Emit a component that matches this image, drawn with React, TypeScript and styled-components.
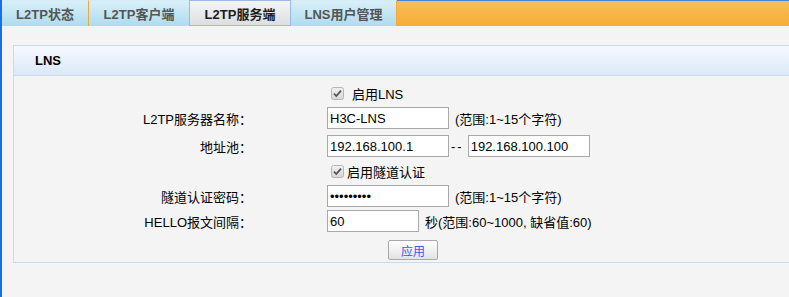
import styled, { createGlobalStyle } from "styled-components";

const GlobalStyle = createGlobalStyle`
  html, body {
    margin: 0;
    padding: 0;
    background: #f4f4f4;
    overflow: hidden;
  }
  body {
    font-family: "Liberation Sans", Arial, "Noto Sans CJK SC", sans-serif;
    font-size: 13px;
    color: #000;
  }
`;

const Page = styled.div`
  height: 297px;
  border-left: 2px solid #1b6fe6;
  background: #f4f4f4;
`;

const TabStrip = styled.div`
  display: flex;
  height: 26px;
`;

const Tab = styled.div<{ $active?: boolean; $w: number }>`
  box-sizing: border-box;
  width: ${(p) => p.$w}px;
  display: flex;
  align-items: center;
  justify-content: center;
  font-weight: bold;
  font-size: 13px;
  white-space: nowrap;
  color: ${(p) => (p.$active ? "#1c1c1c" : "#555")};
  background: ${(p) =>
    p.$active
      ? "linear-gradient(#f3f4f5, #dcdfe2)"
      : "linear-gradient(#d9eff8, #aedcee)"};
  border-top: 1px solid ${(p) => (p.$active ? "#9cb9e2" : "#d4ecf7")};
  border-right: 1px solid ${(p) => (p.$active ? "#9cb9e2" : "#f2a93a")};
  border-left: ${(p) => (p.$active ? "1px solid #9cb9e2" : "none")};
  border-bottom: ${(p) => (p.$active ? "1px solid #9cb9e2" : "none")};
  margin-left: ${(p) => (p.$active ? "-1px" : "0")};
`;

const Filler = styled.div`
  flex: 1;
  border-top: 1px solid #3f88d6;
  background: linear-gradient(#f9bd57, #f6ad37);
`;

const Panel = styled.div`
  margin: 19px -20px 0 11px;
  border: 1px solid #c6dcef;
`;

const PanelHead = styled.div`
  height: 29px;
  display: flex;
  align-items: center;
  padding-left: 21px;
  font-weight: bold;
  font-size: 13px;
  color: #000;
  background: linear-gradient(#f6f9fe, #dbe8f9);
  border-bottom: 1px solid #c6dcef;
`;

const Form = styled.div`
  display: grid;
  grid-template-columns: 238px 1fr;
  column-gap: 75px;
  row-gap: 3px;
  padding: 6px 0 2px;
`;

const Label = styled.div<{ $push?: number }>`
  height: 22px;
  display: flex;
  align-items: center;
  justify-content: flex-end;
  white-space: nowrap;
  color: #000;
  margin-top: ${(p) => p.$push ?? 0}px;
`;

const Field = styled.div<{ $push?: number }>`
  height: 22px;
  display: flex;
  align-items: center;
  white-space: nowrap;
  margin-top: ${(p) => p.$push ?? 0}px;
`;

const TextInput = styled.input<{ $w?: number }>`
  box-sizing: border-box;
  width: ${(p) => p.$w ?? 122}px;
  height: 22px;
  margin: 0;
  padding: 0 2px;
  border: 1px solid #a9a9a9;
  background: #fff;
  font-family: "Liberation Sans", Arial, sans-serif;
  font-size: 13px;
  color: #000;
  outline: none;
`;

const Hint = styled.span`
  margin-left: 6px;
  color: #000;
`;

const Dash = styled.span`
  margin: 0 4px 0 2px;
  letter-spacing: 2px;
`;

const CheckRow = styled.label<{ $gap: number }>`
  display: flex;
  align-items: center;
  gap: ${(p) => p.$gap}px;
  padding-left: 4px;
  color: #000;
`;

const Box = styled.span`
  display: inline-flex;
  width: 13px;
  height: 13px;
`;

const ButtonRow = styled.div`
  grid-column: 1 / 3;
  display: flex;
  justify-content: flex-start;
  padding-left: 374px;
  margin-top: 5px;
`;

const ApplyButton = styled.button`
  width: 50px;
  height: 20px;
  padding: 0;
  border: 1px solid #a8a8a8;
  border-radius: 2px;
  background: linear-gradient(#ffffff, #e3e3e3);
  font-family: "Liberation Sans", Arial, "Noto Sans CJK SC", sans-serif;
  font-size: 12px;
  color: #3a58ee;
`;

const Check = ({ text, gap }: { text: string; gap: number }) => (
  <CheckRow $gap={gap}>
    <Box>
      <svg width="13" height="13" viewBox="0 0 13 13">
        <defs>
          <linearGradient id="cb" x1="0" y1="0" x2="0" y2="1">
            <stop offset="0" stopColor="#f2f2f2" />
            <stop offset="1" stopColor="#d6d6d6" />
          </linearGradient>
        </defs>
        <rect x="0.5" y="0.5" width="12" height="12" rx="2" fill="url(#cb)" stroke="#b5b5b5" />
        <path d="M3 6.6 L5.3 9 L10 3.6" fill="none" stroke="#555" strokeWidth="1.8" />
      </svg>
    </Box>
    <span>{text}</span>
  </CheckRow>
);

export default function App() {
  return (
    <>
      <GlobalStyle />
      <Page>
        <TabStrip>
          <Tab $w={87}>L2TP状态</Tab>
          <Tab $w={101}>L2TP客户端</Tab>
          <Tab $w={102} $active>L2TP服务端</Tab>
          <Tab $w={106}>LNS用户管理</Tab>
          <Filler />
        </TabStrip>

        <Panel>
          <PanelHead>LNS</PanelHead>
          <Form>
            <Label />
            <Field>
              <Check text="启用LNS" gap={8} />
            </Field>

            <Label>L2TP服务器名称：</Label>
            <Field>
              <TextInput defaultValue="H3C-LNS" />
              <Hint>(范围:1~15个字符)</Hint>
            </Field>

            <Label $push={3}>地址池：</Label>
            <Field $push={3}>
              <TextInput defaultValue="192.168.100.1" />
              <Dash>--</Dash>
              <TextInput defaultValue="192.168.100.100" />
            </Field>

            <Label />
            <Field>
              <Check text="启用隧道认证" gap={3} />
            </Field>

            <Label>隧道认证密码：</Label>
            <Field>
              <TextInput type="password" defaultValue="123456789" />
              <Hint>(范围:1~15个字符)</Hint>
            </Field>

            <Label>HELLO报文间隔：</Label>
            <Field>
              <TextInput $w={92} defaultValue="60" />
              <Hint>秒(范围:60~1000, 缺省值:60)</Hint>
            </Field>

            <ButtonRow>
              <ApplyButton>应用</ApplyButton>
            </ButtonRow>
          </Form>
        </Panel>
      </Page>
    </>
  );
}
